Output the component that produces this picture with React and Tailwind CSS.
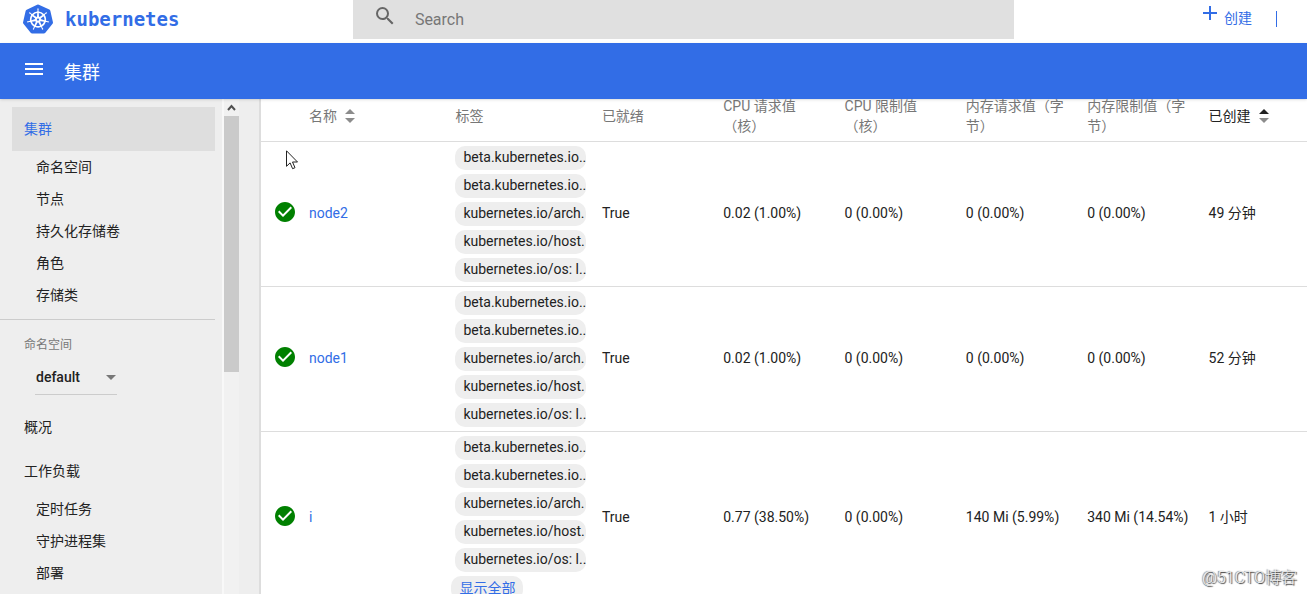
import { useState } from 'react'
import { MdAdd, MdArrowDropDown, MdCheckCircle, MdMenu, MdSearch } from 'react-icons/md'
import { SiKubernetes } from 'react-icons/si'

const clusterItems = ['命名空间', '节点', '持久化存储卷', '角色', '存储类']
const workloadItems = ['定时任务', '守护进程集', '部署']

const labels = [
  'beta.kubernetes.io..',
  'beta.kubernetes.io..',
  'kubernetes.io/arch.',
  'kubernetes.io/host.',
  'kubernetes.io/os: l..',
]

const nodes = [
  { name: 'node2', cpuReq: '0.02 (1.00%)', cpuLim: '0 (0.00%)', memReq: '0 (0.00%)', memLim: '0 (0.00%)', age: '49 分钟' },
  { name: 'node1', cpuReq: '0.02 (1.00%)', cpuLim: '0 (0.00%)', memReq: '0 (0.00%)', memLim: '0 (0.00%)', age: '52 分钟' },
  { name: 'i', cpuReq: '0.77 (38.50%)', cpuLim: '0 (0.00%)', memReq: '140 Mi (5.99%)', memLim: '340 Mi (14.54%)', age: '1 小时', more: true },
]

function SortIcon({ active }) {
  return (
    <svg width="10" height="14" viewBox="0 0 10 14" className="shrink-0">
      <path d="M0 5 5 0l5 5z" fill={active ? '#222' : '#8c8c8c'} />
      <path d="M0 9h10l-5 5z" fill="#8c8c8c" />
    </svg>
  )
}

function Header() {
  const [query, setQuery] = useState('')

  return (
    <header className="h-[43px] shrink-0 flex items-start justify-between bg-white">
      <a href="#" className="w-[27%] pl-[23px] pt-1 flex items-center gap-3 text-[#326de6]">
        <SiKubernetes className="w-[30px] h-[30px]" />
        <span className="font-['DejaVu_Sans_Mono'] text-[19px] leading-[30px] font-bold">kubernetes</span>
      </a>
      <label className="flex-1 h-[39px] flex items-start bg-[#e0e0e0] px-5">
        <MdSearch className="w-6 h-6 mt-1 shrink-0 text-[#666]" />
        <input
          type="text"
          aria-label="Search"
          placeholder="Search"
          value={query}
          onChange={e => setQuery(e.target.value)}
          className="flex-1 min-w-0 h-[39px] ml-[18px] text-base text-[#333] placeholder-[#777] focus:outline-none"
        />
      </label>
      <div className="w-[22.4%] pr-[30px] flex justify-end items-start text-[#326de6]">
        <button type="button" className="flex items-start gap-0.5 text-sm leading-9 pr-6">
          <MdAdd className="w-6 h-6 mt-px" />
          创建
        </button>
        <span className="w-px h-4 mt-[11px] bg-[#326de6]" />
      </div>
    </header>
  )
}

function Sidebar() {
  return (
    <aside className="w-[261px] shrink-0 flex bg-[#eee] border-r-2 border-[#ddd] overflow-hidden">
      <nav className="flex-1 min-w-0 pt-2 pr-[7px] text-sm text-[#222]">
        <a href="#" className="h-11 ml-3 px-3 flex items-center bg-[#dedede] text-[#326de6]">集群</a>
        {clusterItems.map(item => (
          <a key={item} href="#" className="h-8 pl-9 flex items-center">{item}</a>
        ))}
        <div className="mt-2 border-t border-[#ccc] pt-4 pb-2.5">
          <label htmlFor="namespace" className="block pl-6 text-xs leading-[18px] text-[#777]">命名空间</label>
          <div className="relative ml-[35px] mt-1.5 w-[82px] border-b border-[#ccc]">
            <select id="namespace" className="w-full h-[34px] pl-px appearance-none text-sm font-medium">
              <option>default</option>
            </select>
            <MdArrowDropDown className="absolute right-[-6px] top-[5px] w-6 h-6 text-[#777] pointer-events-none" />
          </div>
        </div>
        <a href="#" className="h-11 pl-6 flex items-center">概况</a>
        <a href="#" className="h-11 pl-6 flex items-center">工作负载</a>
        {workloadItems.map(item => (
          <a key={item} href="#" className="h-8 pl-9 flex items-center">{item}</a>
        ))}
      </nav>
      {/* Scrollbar */}
      <div className="w-[17px] shrink-0 mr-5 border-l-2 border-[#f8f8f8] bg-[#f1f1f1]">
        <svg viewBox="0 0 15 17" className="w-full h-[17px]">
          <path d="M4 11l3.500-4 3.500 4" fill="none" stroke="#505050" strokeWidth="2" />
        </svg>
        <div className="h-64 bg-[#cacaca]" />
      </div>
    </aside>
  )
}

function NodeTable() {
  return (
    <table className="w-full -mt-1 table-fixed text-sm leading-5 text-[#222]">
      <colgroup>
        <col className="w-12" />
        <col className="w-[14%]" />
        <col className="w-[14%]" />
        <col className="w-[11.6%]" />
        <col className="w-[11.6%]" />
        <col className="w-[11.6%]" />
        <col className="w-[11.6%]" />
        <col className="w-[11.6%]" />
        <col />
      </colgroup>
      <thead>
        <tr className="border-b border-[#ddd] text-left text-[#777] [&>th]:font-normal [&>th]:pt-px [&>th]:pb-[5px]">
          <th />
          <th>
            <button type="button" className="flex items-center gap-2">名称<SortIcon /></button>
          </th>
          <th>标签</th>
          <th>已就绪</th>
          <th className="pr-5">CPU 请求值（核）</th>
          <th className="pr-5">CPU 限制值（核）</th>
          <th className="pr-5">内存请求值（字节）</th>
          <th className="pr-5">内存限制值（字节）</th>
          <th>
            <button type="button" className="flex items-center gap-2 text-[#222]">已创建<SortIcon active /></button>
          </th>
        </tr>
      </thead>
      <tbody>
        {nodes.map(node => (
          <tr key={node.name} className="border-b border-[#ddd] whitespace-nowrap [&>td]:pb-0.5">
            <td className="pl-3">
              <MdCheckCircle className="w-6 h-6 mb-0.5 text-[#008000]" />
            </td>
            <td><a href="#" className="text-[#326de6]">{node.name}</a></td>
            <td className="pt-1 pr-4">
              <div className="flex flex-col items-start gap-1 pb-0.5">
                {labels.map((label, i) => (
                  <span key={i} className="w-full h-6 pl-2 rounded-[10px] bg-[#eee] leading-[22px]">
                    {label}
                  </span>
                ))}
                {node.more && (
                  <button type="button" className="h-6 -ml-1 px-2 rounded-[10px] bg-[#eee] leading-[22px] text-[#326de6]">
                    显示全部
                  </button>
                )}
              </div>
            </td>
            <td>True</td>
            <td>{node.cpuReq}</td>
            <td>{node.cpuLim}</td>
            <td>{node.memReq}</td>
            <td>{node.memLim}</td>
            <td>{node.age}</td>
          </tr>
        ))}
      </tbody>
    </table>
  )
}

function App() {
  return (
    <div className="relative h-screen flex flex-col overflow-hidden bg-white font-[Roboto,'Noto_Sans_CJK_SC',sans-serif]">
      <Header />
      <div className="h-14 shrink-0 pl-[22px] pb-1 flex items-center gap-[18px] bg-[#326de6] text-white z-10 shadow-sm">
        <button type="button" aria-label="menu">
          <MdMenu className="w-6 h-6" />
        </button>
        <h1 className="pt-2 text-lg leading-6">集群</h1>
      </div>
      <div className="flex-1 min-h-0 flex">
        <Sidebar />
        <main className="flex-1 min-w-0 overflow-hidden">
          <NodeTable />
        </main>
      </div>

      {/* Mouse pointer */}
      <svg width="13" height="20" viewBox="0 0 13 20" className="absolute left-[286px] top-[150px]">
        <path d="M.5.8v15.500l3.600-3.400 2.500 5.800 2.400-1-2.500-5.700h5z" fill="#fff" stroke="#222" />
      </svg>
      <span className="absolute right-2.5 bottom-1 text-base leading-6 font-light text-[#eee] [text-shadow:1px_1px_1px_#333,-1px_0_1px_#777]">
        @51CTO博客
      </span>
    </div>
  )
}

export default App
